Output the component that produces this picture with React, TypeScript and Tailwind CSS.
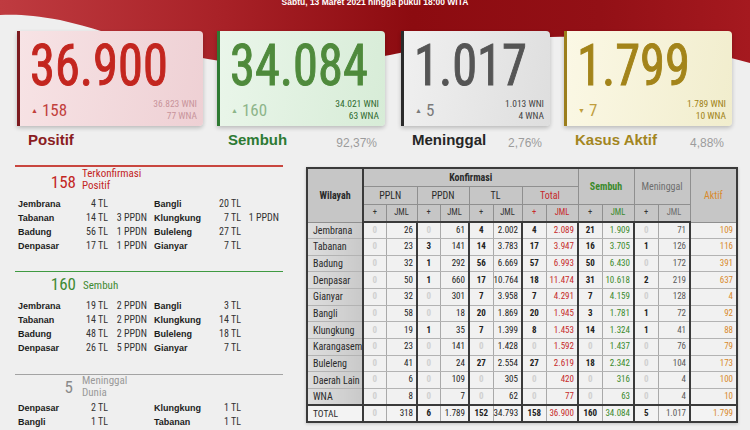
import React from "react";

const NARROW =
  "font-['Liberation_Sans_Narrow','Roboto_Condensed','DejaVu_Sans_Condensed','Arial_Narrow',sans-serif]";
const SANS = "font-['Liberation_Sans',Arial,sans-serif]";

type CardProps = {
  wrap: string;
  bg: string;
  border: string;
  numColor: string;
  deltaColor: string;
  wniColor: string;
  labelColor: string;
  num: string;
  arrow: string;
  delta: string;
  wni: string;
  wna: string;
  label: string;
  pct?: string;
};

function StatCard(p: CardProps) {
  return (
    <div className={p.wrap}>
      <div
        className={`h-[95px] rounded-r-[4px] border-l-[3px] pl-[10px] pr-[6px] pt-[6px] shadow-[0_2px_4px_rgba(0,0,0,0.22)] flex flex-col ${p.bg} ${p.border}`}
      >
        <div
          className={`${NARROW} h-[57px] origin-top-left scale-x-[0.885] whitespace-nowrap text-[57px] leading-[57px] [-webkit-text-stroke:1px_currentColor] ${p.numColor}`}
        >
          {p.num}
        </div>
        <div className="mt-[3.5px] flex items-center justify-between">
          <div className={`flex items-center gap-[4px] pl-[1px] ${p.deltaColor}`}>
            <span className={`${SANS} text-[7px] leading-none`}>{p.arrow}</span>
            <span className={`${NARROW} text-[17px] leading-none`}>{p.delta}</span>
          </div>
          <div className={`${NARROW} text-right text-[9.5px] leading-[12.5px] whitespace-nowrap ${p.wniColor}`}>
            <div>{p.wni}</div>
            <div>{p.wna}</div>
          </div>
        </div>
      </div>
      <div className="mt-[5px] flex h-[18px] items-end justify-between pl-[11px] pr-[8px]">
        <span className={`${SANS} text-[15px] font-bold leading-[18px] ${p.labelColor}`}>{p.label}</span>
        {p.pct && <span className={`${SANS} text-[12px] leading-[12px] text-[#9c9c9c]`}>{p.pct}</span>}
      </div>
    </div>
  );
}

type LR = [string, string, string, string, string, string];

function LeftRow({ r }: { r: LR }) {
  return (
    <div className="flex h-[14px] items-center whitespace-nowrap leading-[14px]">
      <span className={`${SANS} w-[66px] pl-[3px] text-[9px] font-bold text-[#1c1c1c]`}>{r[0]}</span>
      <span className={`${NARROW} w-[27px] text-right text-[10px] text-[#333]`}>{r[1]}</span>
      <span className={`${NARROW} w-[39px] text-right text-[10px] text-[#333]`}>{r[2]}</span>
      <span className={`${SANS} ml-[7px] w-[52px] text-[9px] font-bold text-[#1c1c1c]`}>{r[3]}</span>
      <span className={`${NARROW} w-[35px] text-right text-[10px] text-[#333]`}>{r[4]}</span>
      <span className={`${NARROW} w-[38px] text-right text-[10px] text-[#333]`}>{r[5]}</span>
    </div>
  );
}

const pos: LR[] = [
  ["Jembrana", "4 TL", "", "Bangli", "20 TL", ""],
  ["Tabanan", "14 TL", "3 PPDN", "Klungkung", "7 TL", "1 PPDN"],
  ["Badung", "56 TL", "1 PPDN", "Buleleng", "27 TL", ""],
  ["Denpasar", "17 TL", "1 PPDN", "Gianyar", "7 TL", ""],
];
const semb: LR[] = [
  ["Jembrana", "19 TL", "2 PPDN", "Bangli", "3 TL", ""],
  ["Tabanan", "14 TL", "2 PPDN", "Klungkung", "14 TL", ""],
  ["Badung", "48 TL", "2 PPDN", "Buleleng", "18 TL", ""],
  ["Denpasar", "26 TL", "5 PPDN", "Gianyar", "7 TL", ""],
];
const men: LR[] = [
  ["Denpasar", "2 TL", "", "Klungkung", "1 TL", ""],
  ["Bangli", "1 TL", "", "Tabanan", "1 TL", ""],
];

const rows: string[][] = [
  ["Jembrana", "0", "26", "0", "61", "4", "2.002", "4", "2.089", "21", "1.909", "0", "71", "109"],
  ["Tabanan", "0", "23", "3", "141", "14", "3.783", "17", "3.947", "16", "3.705", "1", "126", "116"],
  ["Badung", "0", "32", "1", "292", "56", "6.669", "57", "6.993", "50", "6.430", "0", "172", "391"],
  ["Denpasar", "0", "50", "1", "660", "17", "10.764", "18", "11.474", "31", "10.618", "2", "219", "637"],
  ["Gianyar", "0", "32", "0", "301", "7", "3.958", "7", "4.291", "7", "4.159", "0", "128", "4"],
  ["Bangli", "0", "58", "0", "18", "20", "1.869", "20", "1.945", "3", "1.781", "1", "72", "92"],
  ["Klungkung", "0", "19", "1", "35", "7", "1.399", "8", "1.453", "14", "1.324", "1", "41", "88"],
  ["Karangasem", "0", "23", "0", "141", "0", "1.428", "0", "1.592", "0", "1.437", "0", "76", "79"],
  ["Buleleng", "0", "41", "0", "24", "27", "2.554", "27", "2.619", "18", "2.342", "0", "104", "173"],
  ["Daerah Lain", "0", "6", "0", "109", "0", "305", "0", "420", "0", "316", "0", "4", "100"],
  ["WNA", "0", "8", "0", "7", "0", "62", "0", "77", "0", "63", "0", "4", "10"],
];
const total = ["TOTAL", "0", "318", "6", "1.789", "152", "34.793", "158", "36.900", "160", "34.084", "5", "1.017", "1.799"];

function cellClass(i: number, v: string): string {
  const plus = i % 2 === 1 && i < 13;
  let color = "text-[#222]";
  if (v === "0") color = "text-[#d0d0d0]";
  else if (i === 8) color = "text-[#c62a2a]";
  else if (i === 10) color = "text-[#3b8a2c]";
  else if (i === 12) color = "text-[#5a5a5a]";
  else if (i === 13) color = "text-[#d98a2c]";
  const align = plus ? "text-center" : "text-right pr-[3px]";
  const br =
    i === 13 ? "" : plus ? "border-r border-r-[#a9a9a9]" : "border-r-2 border-r-[#3a3a3a]";
  const w = plus ? "font-bold" : "";
  return `${align} ${br} ${color} ${w}`;
}

function DataTable() {
  const widths = [
    "w-[56px]",
    "w-[23px]",
    "w-[31px]",
    "w-[23px]",
    "w-[29px]",
    "w-[24px]",
    "w-[29px]",
    "w-[24px]",
    "w-[32px]",
    "w-[24px]",
    "w-[32px]",
    "w-[24px]",
    "w-[32px]",
    "w-[47px]",
  ];
  const hd = "bg-[#c6c6c6] border border-[#8f8f8f] text-center font-bold";
  return (
    <table
      className={`${NARROW} w-[430px] table-fixed border-collapse border-2 border-[#3a3a3a] text-[9px] text-[#2a2a2a] shadow-[0_1px_3px_rgba(0,0,0,0.2)]`}
    >
      <colgroup>
        {widths.map((w, i) => (
          <col key={i} className={w} />
        ))}
      </colgroup>
      <thead>
        <tr className="h-[18px]">
          <th rowSpan={3} className={`${hd} border-r-2 border-r-[#3a3a3a] text-[10px]`}>
            Wilayah
          </th>
          <th colSpan={8} className={`${hd} text-[10px]`}>
            Konfirmasi
          </th>
          <th colSpan={2} rowSpan={2} className={`${hd} text-[10px] text-[#3b8a2c]`}>
            Sembuh
          </th>
          <th colSpan={2} rowSpan={2} className={`${hd} text-[10px] font-normal text-[#6e6e6e]`}>
            Meninggal
          </th>
          <th rowSpan={3} className={`${hd} text-[10px] font-normal text-[#d98a2c]`}>
            Aktif
          </th>
        </tr>
        <tr className="h-[18px]">
          <th colSpan={2} className={`${hd} text-[10px] font-normal`}>PPLN</th>
          <th colSpan={2} className={`${hd} text-[10px] font-normal`}>PPDN</th>
          <th colSpan={2} className={`${hd} text-[10px] font-normal`}>TL</th>
          <th colSpan={2} className={`${hd} text-[10px] font-normal text-[#c62a2a]`}>Total</th>
        </tr>
        <tr className="h-[18px]">
          {["", "", "", "", "", "", "", "", "", "", "", ""].map((_, i) => {
            const isPlus = i % 2 === 0;
            let c = "text-[#333]";
            if (i === 6 || i === 7) c = "text-[#c62a2a]";
            if (i === 9) c = "text-[#3b8a2c]";
            if (i === 11) c = "text-[#6e6e6e]";
            return (
              <th key={i} className={`${hd} border-b-2 border-b-[#3a3a3a] text-[8.5px] font-normal ${c}`}>
                {isPlus ? "+" : "JML"}
              </th>
            );
          })}
        </tr>
      </thead>
      <tbody>
        {rows.map((r, ri) => (
          <tr key={ri} className="h-[16.67px] bg-[#f1f1f1]">
            <td className="whitespace-nowrap border-r-2 border-b border-r-[#3a3a3a] border-b-[#b3b3b3] bg-[linear-gradient(90deg,#dedede,#c9c9c9)] pl-[5px] text-left text-[10px] text-[#2a2a2a]">
              {r[0]}
            </td>
            {r.slice(1).map((v, i) => (
              <td key={i} className={`whitespace-nowrap border-b border-b-[#b3b3b3] ${cellClass(i + 1, v)}`}>
                {v}
              </td>
            ))}
          </tr>
        ))}
        <tr className="h-[17px] bg-[#f3f3f3]">
          <td className="border-t-2 border-r-2 border-t-[#3a3a3a] border-r-[#3a3a3a] pl-[5px] text-left text-[9.5px] text-[#2a2a2a]">
            {total[0]}
          </td>
          {total.slice(1).map((v, i) => (
            <td key={i} className={`whitespace-nowrap border-t-2 border-t-[#3a3a3a] ${cellClass(i + 1, v)}`}>
              {v}
            </td>
          ))}
        </tr>
      </tbody>
    </table>
  );
}

export default function App() {
  return (
    <div className="relative h-[430px] w-[750px] overflow-hidden bg-[#efefef]">
      <svg className="absolute left-0 top-0" width="750" height="80" viewBox="0 0 750 80">
        <defs>
          <linearGradient id="band" x1="0" y1="0" x2="1" y2="0">
            <stop offset="0" stopColor="#bf3b40" />
            <stop offset="0.3" stopColor="#a82127" />
            <stop offset="0.55" stopColor="#8c0b10" />
            <stop offset="0.8" stopColor="#931016" />
            <stop offset="1" stopColor="#a5191f" />
          </linearGradient>
        </defs>
        <path
          d="M0 0 H750 V63 C720 55 690 47 650 41 C610 37 580 36 550 37 C480 40 430 47 390 55 C340 64 280 66 230 62 C170 56 120 34 60 20 C35 15 15 14 0 15 Z"
          fill="url(#band)"
        />
      </svg>

      <div className="relative z-10">
        <div className="flex h-[31px] justify-center">
          <div className={`${SANS} -mt-[2px] text-[8.5px] font-bold leading-none text-white`}>
            Sabtu, 13 Maret 2021 hingga pukul 18:00 WITA
          </div>
        </div>

        <div className="flex items-start">
          <StatCard
            wrap="ml-[17px] w-[186px]"
            bg="bg-[linear-gradient(100deg,#f7e3e5,#eed0d4)]"
            border="border-l-[#7c1b20]"
            numColor="text-[#c3261f]"
            deltaColor="text-[#c2403c]"
            wniColor="text-[#c8949b]"
            labelColor="text-[#8a1c22]"
            num="36.900"
            arrow="▲"
            delta="158"
            wni="36.823 WNI"
            wna="77 WNA"
            label="Positif"
          />
          <StatCard
            wrap="ml-[14px] w-[168px]"
            bg="bg-[linear-gradient(100deg,#eaf6ea,#d7ecd7)]"
            border="border-l-[#2f7a33]"
            numColor="text-[#4f8a3c]"
            deltaColor="text-[#8db58a]"
            wniColor="text-[#2f6b2f]"
            labelColor="text-[#2d7a34]"
            num="34.084"
            arrow="▲"
            delta="160"
            wni="34.021 WNI"
            wna="63 WNA"
            label="Sembuh"
            pct="92,37%"
          />
          <StatCard
            wrap="ml-[16px] w-[149px]"
            bg="bg-[linear-gradient(100deg,#f0f0f0,#dedede)]"
            border="border-l-[#2b2b2b]"
            numColor="text-[#555555]"
            deltaColor="text-[#7a7a7a]"
            wniColor="text-[#444444]"
            labelColor="text-[#262626]"
            num="1.017"
            arrow="▲"
            delta="5"
            wni="1.013 WNI"
            wna="4 WNA"
            label="Meninggal"
            pct="2,76%"
          />
          <StatCard
            wrap="ml-[14px] w-[168px]"
            bg="bg-[linear-gradient(100deg,#fbf8e5,#f1edcd)]"
            border="border-l-[#9b7e1c]"
            numColor="text-[#a3841a]"
            deltaColor="text-[#c09e3e]"
            wniColor="text-[#a08216]"
            labelColor="text-[#a3861f]"
            num="1.799"
            arrow="▼"
            delta="7"
            wni="1.789 WNI"
            wna="10 WNA"
            label="Kasus Aktif"
            pct="4,88%"
          />
        </div>

        <div className="flex items-start">
          <div className="ml-[15px] w-[268px] pt-[16px]">
            <div className="h-[1.5px] bg-[#c9463f]" />
            <div className="mt-[1px] flex h-[24px] items-end">
              <span className={`${NARROW} mb-[1px] w-[61px] text-right text-[17px] leading-[17px] text-[#c3261f]`}>158</span>
              <div className={`${NARROW} ml-[6px] text-[11px] leading-[12px] text-[#c3261f]`}>
                <div>Terkonfirmasi</div>
                <div>Positif</div>
              </div>
            </div>
            <div className="mt-[5px]">
              {pos.map((r, i) => (
                <LeftRow key={i} r={r} />
              ))}
            </div>

            <div className="mt-[18px] h-[1.5px] bg-[#3f9a42]" />
            <div className="flex h-[24px] items-center">
              <span className={`${NARROW} w-[61px] text-right text-[17px] leading-none text-[#3f8a33]`}>160</span>
              <div className={`${NARROW} ml-[7px] mt-[3px] text-[11px] leading-[12px] text-[#3f8a33]`}>Sembuh</div>
            </div>
            <div className="mt-[2.5px]">
              {semb.map((r, i) => (
                <LeftRow key={i} r={r} />
              ))}
            </div>

            <div className="mt-[19px] h-[1.5px] bg-[#a3a3a3]" />
            <div className="flex h-[24px] items-center">
              <span className={`${NARROW} w-[58px] text-right text-[17px] leading-none text-[#8a8a8a]`}>5</span>
              <div className={`${NARROW} ml-[9px] text-[11px] leading-[12px] text-[#9a9a9a]`}>
                <div>Meninggal</div>
                <div>Dunia</div>
              </div>
            </div>
            <div className="mt-[2px]">
              {men.map((r, i) => (
                <LeftRow key={i} r={r} />
              ))}
            </div>
          </div>

          <div className="ml-[23px] mt-[18px]">
            <DataTable />
          </div>
        </div>
      </div>
    </div>
  );
}
